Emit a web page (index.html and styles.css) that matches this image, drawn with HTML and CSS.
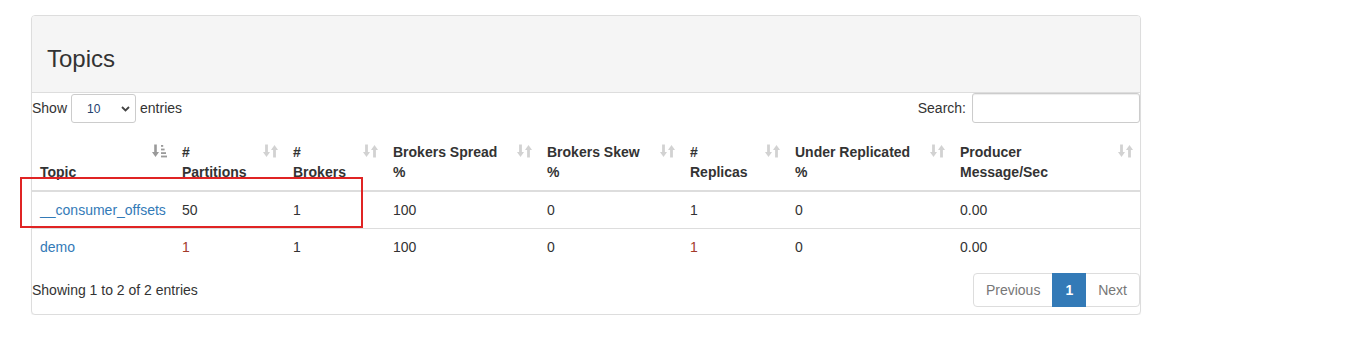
FILE: index.html
```html
<!DOCTYPE html>
<html>
<head>
<meta charset="utf-8">
<link rel="stylesheet" href="styles.css">
</head>
<body>
<div class="page">
  <div class="panel">
    <div class="panel-heading"><h3 class="panel-title">Topics</h3></div>
    <div class="panel-body">
      <div class="controls">
        <label class="length">Show
          <span class="select-wrap">
            <select class="select"><option>10</option></select>
            <svg class="chev" width="9" height="6" viewBox="0 0 9 6"><path d="M1 1 L4.5 4.5 L8 1" fill="none" stroke="#444" stroke-width="1.8"/></svg>
          </span>
          entries</label>
        <label class="search">Search: <input class="search-input" type="text"></label>
      </div>
      <div class="table-wrap">
        <table class="table">
          <colgroup>
            <col style="width:142px"><col style="width:111px"><col style="width:100px"><col style="width:154px">
            <col style="width:143px"><col style="width:105px"><col style="width:165px"><col style="width:188px">
          </colgroup>
          <thead>
            <tr>
              <th class="sorting sorting-asc">Topic
                <svg class="sort-icon" width="15" height="14" viewBox="0 0 15 14"><path d="M3.5 0.5 V10.5" stroke="#9a9a9a" stroke-width="2.6"/><path d="M0 8 L3.5 13 L7 8 Z" fill="#9a9a9a"/><rect x="9" y="1" width="2.2" height="1.8" fill="#9a9a9a"/><rect x="9" y="4.6" width="3.6" height="1.8" fill="#9a9a9a"/><rect x="9" y="8.2" width="5" height="1.8" fill="#9a9a9a"/><rect x="9" y="11.6" width="6" height="1.8" fill="#9a9a9a"/></svg>
              </th>
              <th class="sorting"># <br>Partitions<svg class="sort-icon" width="15" height="14" viewBox="0 0 15 14"><path d="M3.5 0.5 V10.5" stroke="#d2d2d2" stroke-width="2.8"/><path d="M0 8 L3.5 13 L7 8 Z" fill="#d2d2d2"/><path d="M11.5 3.5 V13.5" stroke="#d2d2d2" stroke-width="2.8"/><path d="M8 6 L11.5 1 L15 6 Z" fill="#d2d2d2"/></svg></th>
              <th class="sorting"># <br>Brokers<svg class="sort-icon" width="15" height="14" viewBox="0 0 15 14"><path d="M3.5 0.5 V10.5" stroke="#d2d2d2" stroke-width="2.8"/><path d="M0 8 L3.5 13 L7 8 Z" fill="#d2d2d2"/><path d="M11.5 3.5 V13.5" stroke="#d2d2d2" stroke-width="2.8"/><path d="M8 6 L11.5 1 L15 6 Z" fill="#d2d2d2"/></svg></th>
              <th class="sorting">Brokers Spread <br>%<svg class="sort-icon" width="15" height="14" viewBox="0 0 15 14"><path d="M3.5 0.5 V10.5" stroke="#d2d2d2" stroke-width="2.8"/><path d="M0 8 L3.5 13 L7 8 Z" fill="#d2d2d2"/><path d="M11.5 3.5 V13.5" stroke="#d2d2d2" stroke-width="2.8"/><path d="M8 6 L11.5 1 L15 6 Z" fill="#d2d2d2"/></svg></th>
              <th class="sorting">Brokers Skew <br>%<svg class="sort-icon" width="15" height="14" viewBox="0 0 15 14"><path d="M3.5 0.5 V10.5" stroke="#d2d2d2" stroke-width="2.8"/><path d="M0 8 L3.5 13 L7 8 Z" fill="#d2d2d2"/><path d="M11.5 3.5 V13.5" stroke="#d2d2d2" stroke-width="2.8"/><path d="M8 6 L11.5 1 L15 6 Z" fill="#d2d2d2"/></svg></th>
              <th class="sorting"># <br>Replicas<svg class="sort-icon" width="15" height="14" viewBox="0 0 15 14"><path d="M3.5 0.5 V10.5" stroke="#d2d2d2" stroke-width="2.8"/><path d="M0 8 L3.5 13 L7 8 Z" fill="#d2d2d2"/><path d="M11.5 3.5 V13.5" stroke="#d2d2d2" stroke-width="2.8"/><path d="M8 6 L11.5 1 L15 6 Z" fill="#d2d2d2"/></svg></th>
              <th class="sorting">Under Replicated <br>%<svg class="sort-icon" width="15" height="14" viewBox="0 0 15 14"><path d="M3.5 0.5 V10.5" stroke="#d2d2d2" stroke-width="2.8"/><path d="M0 8 L3.5 13 L7 8 Z" fill="#d2d2d2"/><path d="M11.5 3.5 V13.5" stroke="#d2d2d2" stroke-width="2.8"/><path d="M8 6 L11.5 1 L15 6 Z" fill="#d2d2d2"/></svg></th>
              <th class="sorting">Producer <br>Message/Sec<svg class="sort-icon" width="15" height="14" viewBox="0 0 15 14"><path d="M3.5 0.5 V10.5" stroke="#d2d2d2" stroke-width="2.8"/><path d="M0 8 L3.5 13 L7 8 Z" fill="#d2d2d2"/><path d="M11.5 3.5 V13.5" stroke="#d2d2d2" stroke-width="2.8"/><path d="M8 6 L11.5 1 L15 6 Z" fill="#d2d2d2"/></svg></th>
            </tr>
          </thead>
          <tbody>
            <tr>
              <td><a class="link" href="#">__consumer_offsets</a></td>
              <td>50</td><td>1</td><td>100</td><td>0</td><td>1</td><td>0</td><td>0.00</td>
            </tr>
            <tr>
              <td><a class="link" href="#">demo</a></td>
              <td class="warn">1</td><td>1</td><td>100</td><td>0</td><td class="warn">1</td><td>0</td><td>0.00</td>
            </tr>
          </tbody>
        </table>
        <div class="highlight"></div>
      </div>
      <div class="footer">
        <div class="info">Showing 1 to 2 of 2 entries</div>
        <ul class="pagination">
          <li class="page-item disabled"><span>Previous</span></li>
          <li class="page-item active"><span>1</span></li>
          <li class="page-item disabled"><span>Next</span></li>
        </ul>
      </div>
    </div>
  </div>
</div>
</body>
</html>
```
FILE: styles.css
```css
* { box-sizing: border-box; }
html, body { margin: 0; padding: 0; background: #fff; }
body {
  font-family: "Liberation Sans", Arial, Helvetica, sans-serif;
  font-size: 14px;
  line-height: 20px;
  color: #333;
}
.page { padding: 15px 0 0 31px; }
.panel {
  width: 1110px;
  border: 1px solid #ddd;
  border-radius: 4px;
  background: #fff;
  box-shadow: 0 1px 1px rgba(0,0,0,0.05);
}
.panel-heading {
  background: #f5f5f5;
  border-bottom: 1px solid #ddd;
  border-radius: 3px 3px 0 0;
  padding: 10px 15px;
  height: 77px;
}
.panel-title {
  margin: 20px 0 10px;
  font-size: 24px;
  font-weight: 500;
  line-height: 26px;
  color: #333;
}
.panel-body { padding: 0 0 7px; }
.controls {
  display: flex;
  justify-content: space-between;
  align-items: flex-start;
  height: 31px;
}
.length, .search { display: flex; align-items: center; font-weight: normal; height: 29px; }
.select-wrap { position: relative; display: inline-block; margin: 0 4px; height: 29px; }
.select {
  display: block;
  -webkit-appearance: none;
  appearance: none;
  width: 65px;
  height: 29px;
  border: 1px solid #ccc;
  border-radius: 3px;
  background: #fff;
  font-family: "Liberation Sans", Arial, sans-serif;
  font-size: 12px;
  color: #23406e;
  padding: 0 0 0 15px;
  margin-top: 1px;
}
.chev { position: absolute; right: 6px; top: 13px; }
.search-input {
  width: 168px;
  height: 30px;
  margin-left: 6px;
  margin-top: 1px;
  border: 1px solid #ccc;
  border-radius: 3px;
  box-shadow: inset 0 1px 1px rgba(0,0,0,0.075);
}
.table-wrap { position: relative; margin-top: 10px; }
.table {
  width: 1108px;
  table-layout: fixed;
  border-collapse: collapse;
  border-spacing: 0;
}
.table th {
  position: relative;
  text-align: left;
  vertical-align: bottom;
  font-weight: bold;
  padding: 8px 30px 8px 8px;
  border-bottom: 2px solid #ddd;
  white-space: nowrap;
}
.sort-icon { position: absolute; right: 7px; top: 10px; }
.table td {
  padding: 8px;
  border-top: 1px solid #ddd;
  vertical-align: top;
}
.link { color: #337ab7; text-decoration: none; }
.warn { color: #a33a2a; }
.highlight {
  position: absolute;
  left: -12px;
  top: 43px;
  width: 343px;
  height: 51px;
  border: 2px solid #e02424;
  pointer-events: none;
}
.footer {
  display: flex;
  justify-content: space-between;
  align-items: center;
  margin-top: 8px;
}
.pagination {
  display: flex;
  list-style: none;
  margin: 0;
  padding: 0;
  border-radius: 4px;
}
.page-item span {
  display: block;
  padding: 6px 12px;
  line-height: 20px;
  border: 1px solid #ddd;
  margin-left: -1px;
  color: #777;
  background: #fff;
}
.page-item:first-child span { margin-left: 0; border-radius: 4px 0 0 4px; }
.page-item:last-child span { border-radius: 0 4px 4px 0; }
.page-item.active span {
  background: #337ab7;
  border-color: #337ab7;
  color: #fff;
  font-weight: bold;
  position: relative;
  z-index: 1;
}
```
